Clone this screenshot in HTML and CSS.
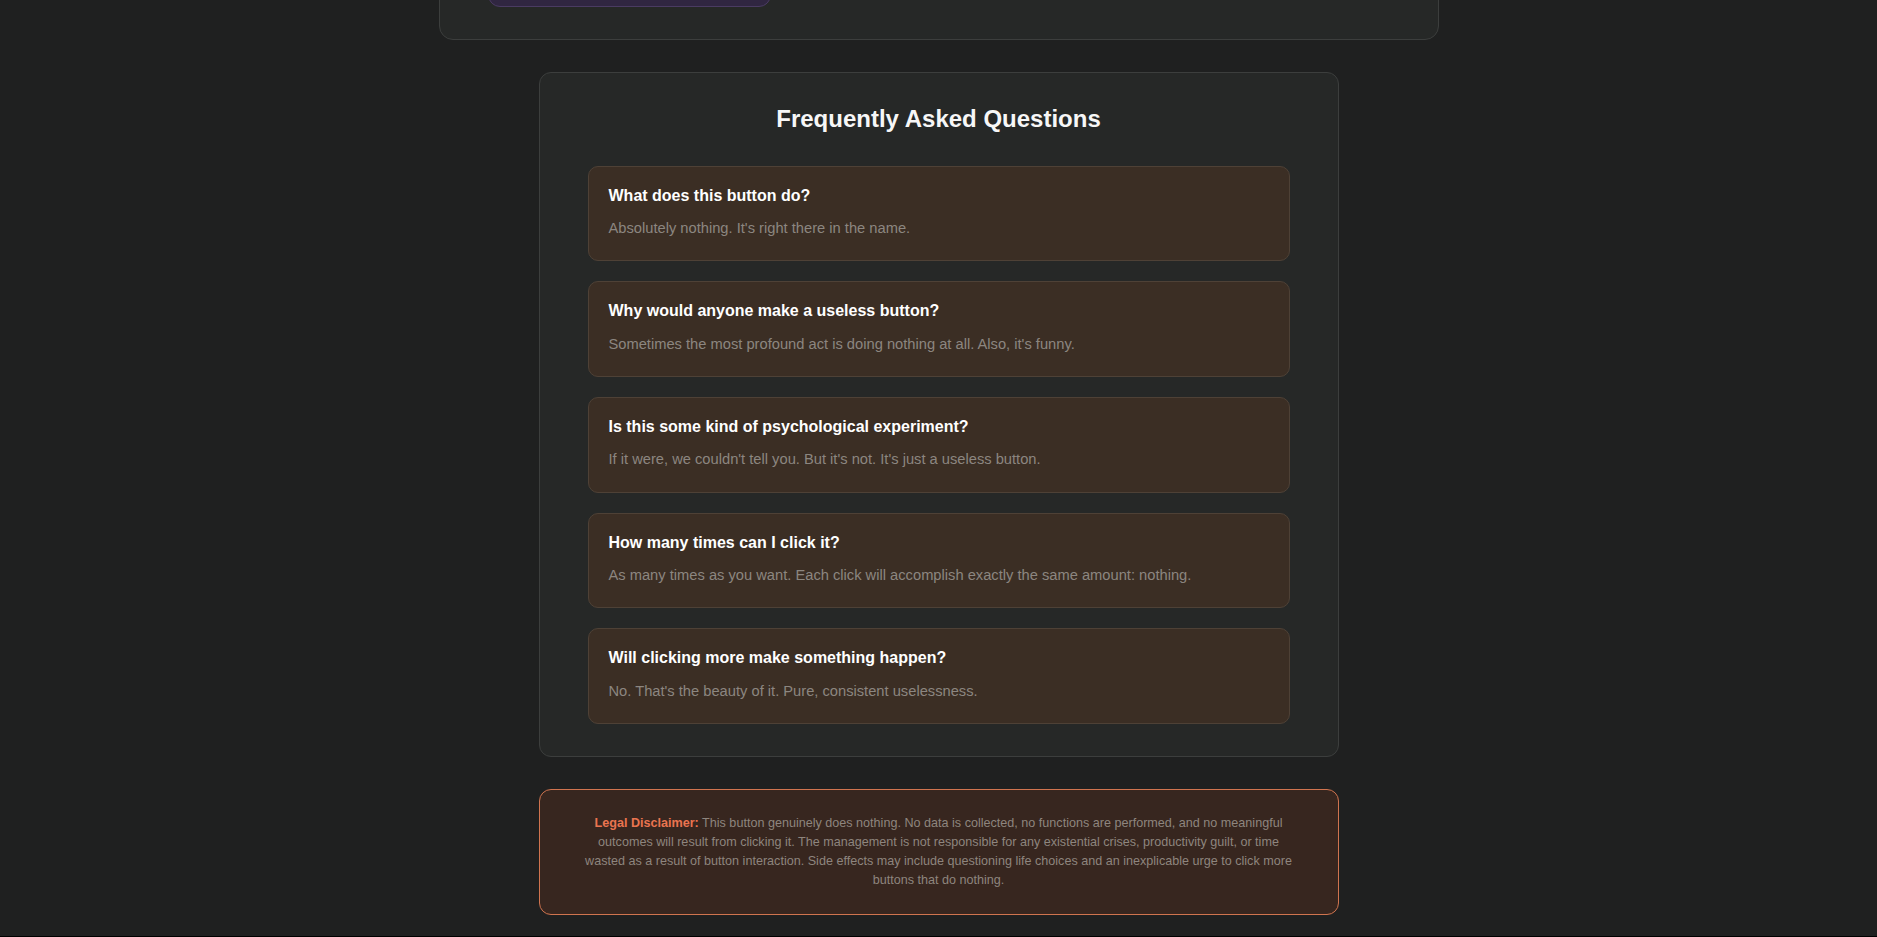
FILE: index.html
```html
<!DOCTYPE html>
<html lang="en">
<head>
<meta charset="utf-8">
<title>The Useless Button</title>
<link rel="stylesheet" href="styles.css">
</head>
<body>
<main class="page">
  <section class="hero-card">
    <button class="useless-btn" type="button" aria-label="Do nothing"></button>
  </section>

  <section class="faq-card">
    <h2 class="faq-title">Frequently Asked Questions</h2>
    <div class="faq-list">
      <div class="faq-item">
        <h3 class="faq-q">What does this button do?</h3>
        <p class="faq-a">Absolutely nothing. It's right there in the name.</p>
      </div>
      <div class="faq-item">
        <h3 class="faq-q">Why would anyone make a useless button?</h3>
        <p class="faq-a">Sometimes the most profound act is doing nothing at all. Also, it's funny.</p>
      </div>
      <div class="faq-item">
        <h3 class="faq-q">Is this some kind of psychological experiment?</h3>
        <p class="faq-a">If it were, we couldn't tell you. But it's not. It's just a useless button.</p>
      </div>
      <div class="faq-item">
        <h3 class="faq-q">How many times can I click it?</h3>
        <p class="faq-a">As many times as you want. Each click will accomplish exactly the same amount: nothing.</p>
      </div>
      <div class="faq-item">
        <h3 class="faq-q">Will clicking more make something happen?</h3>
        <p class="faq-a">No. That's the beauty of it. Pure, consistent uselessness.</p>
      </div>
    </div>
  </section>

  <section class="disclaimer">
    <p><strong class="disclaimer-label">Legal Disclaimer:</strong> This button genuinely does nothing. No data is collected, no functions are performed, and no meaningful outcomes will result from clicking it. The management is not responsible for any existential crises, productivity guilt, or time wasted as a result of button interaction. Side effects may include questioning life choices and an inexplicable urge to click more buttons that do nothing.</p>
  </section>
</main>
</body>
</html>
```
FILE: styles.css
```css
html {
  background: #000;
}
body {
  margin: 0;
  min-height: calc(100vh - 1px);
  background: #1f2020;
  font-family: "Liberation Sans", Arial, sans-serif;
  color: #f4f4f4;
  overflow: hidden;
}
.page {
  display: flex;
  flex-direction: column;
  align-items: center;
  margin-top: -82px;
  padding-bottom: 20px;
}
.hero-card {
  box-sizing: border-box;
  width: 1000px;
  background: #262827;
  border: 1px solid #3c3e3d;
  border-radius: 14px;
  padding: 32px 48px;
  display: flex;
}
.useless-btn {
  width: 283px;
  height: 56px;
  background: #302641;
  border: 1px solid #4a3b62;
  border-radius: 12px;
}
.faq-card {
  box-sizing: border-box;
  width: 800px;
  margin-top: 32px;
  background: #262827;
  border: 1px solid #3c3e3d;
  border-radius: 12px;
  padding: 32px 48px;
}
.faq-title {
  margin: 0 0 32px;
  text-align: center;
  font-size: 24px;
  line-height: 1.2;
  font-weight: 700;
  color: #f7f7f7;
}
.faq-list {
  display: flex;
  flex-direction: column;
  gap: 20px;
}
.faq-item {
  background: #3b2e24;
  border: 1px solid #4e4136;
  border-radius: 10px;
  padding: 20px;
}
.faq-q {
  margin: 0 0 12px;
  font-size: 16px;
  line-height: 1.15;
  font-weight: 700;
  color: #ffffff;
}
.faq-a {
  margin: 0;
  font-size: 14.7px;
  line-height: 23.2px;
  color: #8c8680;
}
.disclaimer {
  box-sizing: border-box;
  width: 800px;
  margin-top: 32px;
  background: #37261f;
  border: 1px solid #d0744f;
  border-radius: 12px;
  padding: 24px 40px;
  text-align: center;
}
.disclaimer p {
  margin: 0;
  font-size: 12.6px;
  line-height: 19px;
  color: #8e857e;
}
.disclaimer-label {
  color: #ea7450;
  font-weight: 700;
}
```
